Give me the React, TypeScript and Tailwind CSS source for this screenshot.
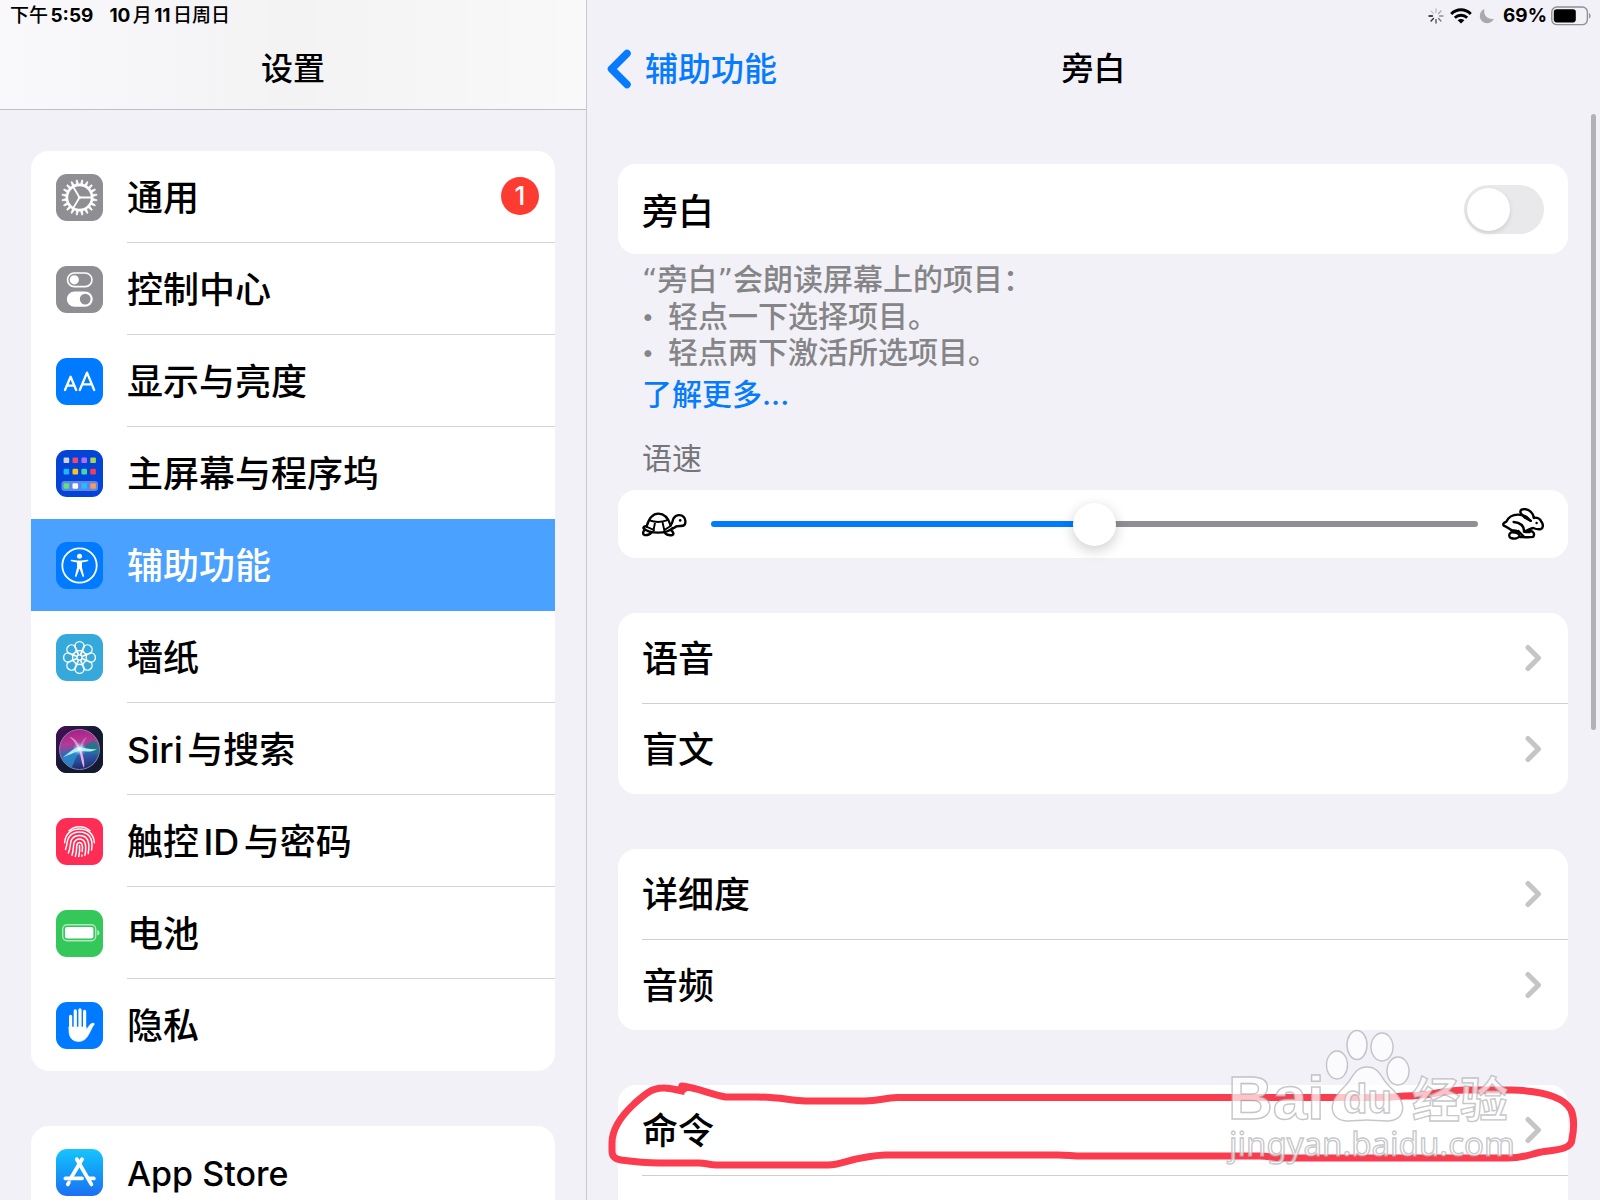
import { useState, type ReactNode } from 'react';

const spokes = (count: number) => Array.from({ length: count }, (_, i) => (360 / count) * i);

const GearIcon = () => (
  <svg viewBox="0 0 47 47" className="size-full" fill="none" stroke="#fff">
    <circle cx="23.5" cy="23.5" r="12.6" strokeWidth="2.6" />
    {spokes(20).map((angle) => (
      <path key={angle} d="M22.3 10.5 L22.9 5.8 H24.1 L24.7 10.5 Z" fill="#fff" strokeWidth="0.5" transform={`rotate(${angle + 9} 23.5 23.5)`} />
    ))}
    <path d="M23.5 23.5 H35.5 M23.5 23.5 L17.3 13 M23.5 23.5 L17.3 34" strokeWidth="1.8" />
    <circle cx="23.5" cy="23.5" r="1.6" fill="#fff" stroke="none" />
  </svg>
);

const ControlIcon = () => (
  <svg viewBox="0 0 47 47" className="size-full">
    <rect x="11.5" y="7" width="24.5" height="13.6" rx="6.8" fill="none" stroke="#fff" strokeWidth="1.6" />
    <circle cx="18.3" cy="13.8" r="4.6" fill="#fff" />
    <rect x="10.8" y="25.4" width="26" height="15.4" rx="7.7" fill="#fff" />
    <circle cx="29.2" cy="33.1" r="5.4" fill="#8e8e93" />
  </svg>
);

const DisplayIcon = () => (
  <svg viewBox="0 0 47 47" className="size-full" fill="none" stroke="#fff" strokeWidth="2.3" strokeLinecap="round" strokeLinejoin="round">
    <path d="M9 32 L14.6 18.7 L20.2 32 M11 27.6 H18.2" />
    <path d="M23.8 32 L31 14.6 L38.2 32 M26.3 26.3 H35.7" />
  </svg>
);

const homeDots = [
  { y: 7.5, fills: ['#d1d1d6', '#f2486f', '#af6cf5', '#a4d64c'] },
  { y: 18.8, fills: ['#1fb6ff', '#fcc419', '#45d6a4', '#f53d4c'] },
  { y: 33.2, fills: ['#5fe07c', '#ffffff', '#22bfff', '#f59d55'] },
];

const HomeIcon = () => (
  <svg viewBox="0 0 47 47" className="size-full">
    <rect x="5.5" y="31" width="36.5" height="10" rx="3" fill="#5f86e6" />
    {homeDots.map((row) =>
      row.fills.map((fill, i) => <rect key={fill} x={7.6 + i * 8.9} y={row.y} width="5.6" height="5.6" rx="1.2" fill={fill} />)
    )}
  </svg>
);

const AccessibilityIcon = () => (
  <svg viewBox="0 0 47 47" className="size-full" fill="none" stroke="#fff">
    <circle cx="23.5" cy="23.5" r="17.2" strokeWidth="1.8" />
    <circle cx="23.5" cy="14.2" r="2.5" fill="#fff" stroke="none" />
    <path
      d="M15.6 17.8 L21.5 18.5 H25.5 L31.4 17.8 C32.6 17.7 32.8 19 31.7 19.2 L26 20.4 V25.6 L28 33.8 C28.2 35 26.8 35.3 26.4 34.2 L23.5 26.6 L20.6 34.2 C20.2 35.3 18.8 35 19 33.8 L21 25.6 V20.4 L15.3 19.2 C14.2 19 14.4 17.7 15.6 17.8 Z"
      fill="#fff"
      stroke="none"
    />
  </svg>
);

const WallpaperIcon = () => (
  <svg viewBox="0 0 47 47" className="size-full" fill="none" stroke="#fff" strokeWidth="1.4">
    {spokes(8).map((angle) => (
      <g key={angle} transform={`rotate(${angle} 23.5 23.5)`}>
        <circle cx="23.5" cy="12.2" r="4.6" />
        <path d="M20.6 15.8 C20.4 17.8 21 19.4 22.4 21 M26.4 15.8 C26.6 17.8 26 19.4 24.6 21" strokeWidth="1.1" />
      </g>
    ))}
    <circle cx="23.5" cy="23.5" r="2.6" />
  </svg>
);

const SiriIcon = () => (
  <svg viewBox="0 0 47 47" className="size-full">
    <defs>
      <linearGradient id="siri-bg" x1="0" y1="0" x2="1" y2="1">
        <stop offset="0" stopColor="#4a0d5c" />
        <stop offset="0.5" stopColor="#131a33" />
        <stop offset="1" stopColor="#151a30" />
      </linearGradient>
      <linearGradient id="siri-orb" x1="0.35" y1="0" x2="0.5" y2="1">
        <stop offset="0" stopColor="#a81d86" />
        <stop offset="0.35" stopColor="#b53a96" />
        <stop offset="0.6" stopColor="#2f68b8" />
        <stop offset="1" stopColor="#202a70" />
      </linearGradient>
      <radialGradient id="siri-glow">
        <stop offset="0" stopColor="#ffffff" />
        <stop offset="0.4" stopColor="#d7f4ff" stopOpacity="0.6" />
        <stop offset="1" stopColor="#8fd8ff" stopOpacity="0" />
      </radialGradient>
    </defs>
    <rect width="47" height="47" fill="url(#siri-bg)" />
    <circle cx="23.5" cy="23.5" r="20" fill="url(#siri-orb)" stroke="#8b86a8" strokeWidth="1" />
    <path d="M24 23 L38 14 C44 19 43 25 42 29 Z" fill="#1c7a83" opacity="0.8" />
    <path d="M24 22 C17 22 9 28 6 32 C9 38 13 41 16 41 Z" fill="#2e8fd0" opacity="0.8" />
    <path d="M24 22 C22 15 17 11 13 11 C18 14 20 19 22 23 Z" fill="#f0a4d6" opacity="0.8" />
    <path d="M24 22 C25 16 28 12 31 11 C28 15 27 19 26 23 Z" fill="#d793e8" opacity="0.6" />
    <path d="M23 24 C25 30 25 36 28 42 C29 36 27 29 25 23 Z" fill="#f3a7e3" />
    <path d="M7 31 C14 27 18 21 24 21 C30 22 35 24 41 23 C35 27 29 25 24 25 C18 26 14 29 7 31 Z" fill="#a7f4f0" />
    <circle cx="23.5" cy="23" r="7" fill="url(#siri-glow)" />
  </svg>
);

const TouchIdIcon = () => (
  <svg viewBox="0 0 47 47" className="size-full" fill="none" stroke="#fff" strokeWidth="1.5" strokeLinecap="round">
    <path d="M13 12.8 C19 7.4 28 7.4 34 12.8" />
    <path d="M8.6 24.8 C9.2 15.4 15.6 11 23.5 11 S37.8 15.4 38.4 24.8" />
    <path d="M9.5 31.5 C11.5 27 10.4 22 13.4 18.4 C18.4 12.6 28.6 12.6 33.6 18.4 C36 21.6 36.4 27 35.6 32" />
    <path d="M12.4 35 C15 29 13.8 24.6 15.6 21.6 C19 16.2 28 16.2 31.4 21.6 C33.6 25.6 33.2 30 32.2 35.6" />
    <path d="M16 37.2 C18 31 17 27.4 18.2 24.4 C20.4 19.8 26.6 19.8 28.8 24.4 C30.6 29 29.8 33 28.8 37.4" />
    <path d="M19.4 38.2 C21.4 32 20 28.6 21.2 26 C22.4 24 24.6 24 25.8 26 C27.2 29 26.4 32 26.2 33.4" />
    <path d="M23.5 27.5 C24 32 23.6 35 22.8 38.4 M26 37 L25.8 38.2" />
  </svg>
);

const BatteryTileIcon = () => (
  <svg viewBox="0 0 47 47" className="size-full">
    <rect x="6.7" y="14.7" width="33" height="16" rx="4.4" fill="none" stroke="#fff" strokeOpacity="0.6" strokeWidth="1.4" />
    <rect x="9" y="17" width="28.4" height="11.4" rx="2" fill="#fff" />
    <path d="M41.4 20 C44 21 44 24.6 41.4 25.6 Z" fill="#fff" fillOpacity="0.7" />
  </svg>
);

const HandIcon = () => (
  <svg viewBox="0 0 47 47" className="size-full" fill="#fff" stroke="#fff" strokeLinecap="round" strokeLinejoin="round">
    <path d="M14.6 14.4 V28 M19.3 8.8 V25 M24 7.8 V25 M28.6 9.4 V26" strokeWidth="3.2" />
    <path d="M13 25 H30.2 V27.5 C31.4 26.4 32.6 24.8 33.6 23.2 C34.8 21.4 36.4 21 38 21.4 C38.6 21.6 38.6 22 38.2 22.4 C36.4 24.6 35 28 33.2 31.6 C30.6 36.6 27.6 39.5 22.8 39.5 C16.6 39.5 13 35.6 13 29 Z" strokeWidth="0.6" />
  </svg>
);

const AppStoreIcon = () => (
  <svg viewBox="0 0 47 47" className="size-full" fill="none" stroke="#fff" strokeWidth="3.8" strokeLinecap="round">
    <path d="M26 10.2 L14.6 29.6 M12.9 33.4 L11.8 35.4" />
    <path d="M20.8 10.2 L35.4 35.4" />
    <path d="M9.4 29.4 H26 M33.4 29.4 H37.8" />
  </svg>
);

const TurtleIcon = () => (
  <svg viewBox="0 0 45 25" className="h-[25px] w-[45px] shrink-0" fill="none" stroke="#000" strokeWidth="2.4" strokeLinecap="round" strokeLinejoin="round">
    <path d="M4.6 14.4 C7 6 10.6 1.6 16.4 1.6 C22.4 1.6 26.4 6.4 28.6 13.2" />
    <path d="M4.6 14.4 C2.8 13.6 1 15.4 1.6 16.4 C5 19.6 10 20.6 16 20.6 C22 20.6 27.2 19.6 30.6 16" />
    <path d="M7.6 8.4 C13 10.4 19.6 10.4 25.6 8.2 M13.2 9.8 L11.4 18.8 M20.4 9.6 L22.4 18.8 M4.8 14.8 L12 18 M22.4 18 L28.6 14" strokeWidth="1.9" />
    <path d="M28.6 13.2 C30.6 11.6 30.2 8.8 31.8 6 C33.8 2.8 38.8 2 41.6 4.8 C44 7.4 43.8 11.4 42.4 13 C40.6 14.6 37 13.4 34.4 14.4 C32.6 15.4 32 16 30.6 16.6" />
    <path d="M2.6 17.8 C0.6 20 0.8 22.4 2.4 23 C5.4 23.4 8 22.4 9.6 20.2 M22.6 20.4 C24.4 22.6 27.6 23.6 30.4 23 C32.2 22.2 31.4 19.8 28.8 18" />
    <circle cx="38.2" cy="8.4" r="1.3" fill="#000" stroke="none" />
  </svg>
);

const RabbitIcon = () => (
  <svg viewBox="0 0 42 32" className="h-8 w-[42px] shrink-0" fill="none" stroke="#000" strokeWidth="2.4" strokeLinecap="round" strokeLinejoin="round">
    <path d="M28.4 12.6 C25 7.6 20.4 6.8 16.6 6.6 C11.4 6.4 6.6 8.8 4.4 13.6 C1.6 14.6 0.6 16.2 1.8 17.6 C4.6 18.6 7 20.8 10 22.4 C12.4 22.8 14.4 22 16.4 23.8" />
    <path d="M28.8 12.8 C24.6 11.4 19.6 7.4 18.4 4.4 C18 1.6 20.6 1 23.4 1.2 C28 2.2 31.2 5.4 32 10" />
    <path d="M31.8 9.6 C35.4 9.4 38.4 11 39.4 13.8 C41.6 16.6 41.2 20 39 21 C36.4 21.8 33.6 21 31.2 20 C28.6 20 25.2 23 22.2 23.4 C22 19 20.4 14.6 11.6 14" />
    <path d="M16.4 23 C18.6 25.6 20.6 27 22.4 29.2 M27.8 22.8 C31.8 23.4 33 26.2 31.2 28.8 C27.6 29.6 23 29.2 18 29 M22 23.6 C23.8 24.4 25.4 24.2 27.8 24" />
    <path d="M9 24.4 C6.4 26 6.8 29.2 9 30 C12.4 31 16.4 30.4 17.6 28 C17.4 25.6 13 23.6 9 24.4 Z" />
    <circle cx="34.6" cy="15" r="1.2" fill="#000" stroke="none" />
  </svg>
);

const spinnerOpacity = [0.2, 0.3, 0.4, 0.5, 0.65, 0.8, 0.95, 0.15];

const SpinnerIcon = () => (
  <svg viewBox="0 0 16 16" className="size-4" stroke="#000" strokeWidth="1.4" strokeLinecap="round">
    {spokes(8).map((angle, i) => (
      <path key={angle} d="M8 1 V4.4" opacity={spinnerOpacity[i]} transform={`rotate(${angle} 8 8)`} />
    ))}
  </svg>
);

const WifiIcon = () => (
  <svg viewBox="0 0 22 16" className="h-4 w-[22px]" fill="none" stroke="#000" strokeWidth="2.9">
    <path d="M1.2 6 C6.8 0.4 15.2 0.4 20.8 6" />
    <path d="M4.8 9.8 C8.4 6.4 13.6 6.4 17.2 9.8" />
    <path d="M11 15.6 L7.6 12.3 C9.6 10.6 12.4 10.6 14.4 12.3 Z" fill="#000" stroke="none" />
  </svg>
);

const MoonIcon = () => (
  <svg viewBox="0 0 16 16" className="size-4">
    <path d="M5.4 1 C4 6.6 8.4 12 15 10.8 C13.6 13.8 10.8 15.2 8 15.2 C4 15.2 0.8 12 0.8 8 C0.8 4.8 2.6 2 5.4 1 Z" fill="#a9a9ae" />
  </svg>
);

const BatteryIcon = () => (
  <svg viewBox="0 0 40 20" className="h-5 w-10">
    <rect x="0.8" y="1" width="35.6" height="17.6" rx="5" fill="none" stroke="#8f8f94" strokeWidth="1.4" />
    <rect x="2.8" y="3.2" width="22" height="13.2" rx="2.8" fill="#000" />
    <path d="M38 7 C40 8 40 11.6 38 12.6 Z" fill="#8f8f94" />
  </svg>
);

const PawWatermark = () => (
  <svg
    viewBox="0 0 300 145"
    className="pointer-events-none absolute right-[78px] bottom-7 h-[145px] w-[300px]"
    fill="#fff"
    fillOpacity="0.7"
    stroke="#a8a8ac"
    strokeOpacity="0.65"
    strokeWidth="1.4"
  >
    <text x="6" y="92" className="font-['Liberation_Sans',sans-serif] text-[62px] font-bold">Bai</text>
    <ellipse cx="115" cy="38" rx="10.5" ry="14" />
    <ellipse cx="135" cy="18" rx="10" ry="14.5" />
    <ellipse cx="160" cy="20" rx="11" ry="14" />
    <ellipse cx="176" cy="44" rx="11" ry="14" />
    <path d="M145 40 C158 40 159 52 168 60 C178 69 185 79 178 89 C171 97 158 93 145 93 C132 93 120 97 113 89 C106 79 113 69 122 60 C131 52 132 40 145 40 Z" />
    <text x="121" y="86" className="font-['Liberation_Sans',sans-serif] text-[40px] font-bold">du</text>
    <text x="190" y="90" className="font-['Noto_Sans_CJK_SC',sans-serif] text-[48px] font-bold">经验</text>
    <text x="7" y="129" className="font-['Noto_Sans',sans-serif] text-[33px]">jingyan.baidu.com</text>
  </svg>
);

const HandDrawnLoop = () => (
  <svg
    viewBox="0 0 980 90"
    preserveAspectRatio="none"
    className="pointer-events-none absolute -top-1 -left-3 h-[90px] w-[calc(100%+28px)]"
    fill="none"
    stroke="#fb3b4e"
    strokeWidth="7"
    strokeLinejoin="round"
  >
    <path d="M79 10.5 C70 9 64 6.5 57 7 C45 7 38 14 28 23 C14 36 6 48 6 62 V70 C6 76 9 78 15 79 C30 81 42 82 53 82 H93 C100 82 104 84 110 84 H223 C236 84 250 75 280 74 H453 C462 74 468 75 478 75 H655 C664 75 670 77 678 77 H900 C920 78 928 72 940 70.5 C956 69 968 67 968 58 C970 48 970 36 967 29 C960 16 940 10 908 9 H860 C840 9 826 15 800 15 C780 17 770 16.5 760 16.5 H292 C278 17 274 20 259 20 H200 C184 19 170 16 152 16 H120 C104 13 92 7 76 5 L80 11" />
  </svg>
);

const Chevron = () => (
  <svg viewBox="0 0 18 28" className="mr-[26px] h-7 w-[18px] shrink-0" fill="none" stroke="#c5c5c7" strokeWidth="5" strokeLinecap="round" strokeLinejoin="round">
    <path d="M4 3.5 L14.5 14 L4 24.5" />
  </svg>
);

type SidebarItem = { label: string; tile: string; icon: ReactNode; badge?: number };

const sidebarItems: SidebarItem[] = [
  { label: '通用', tile: 'bg-[#8e8e93]', icon: <GearIcon />, badge: 1 },
  { label: '控制中心', tile: 'bg-[#8e8e93]', icon: <ControlIcon /> },
  { label: '显示与亮度', tile: 'bg-[#007aff]', icon: <DisplayIcon /> },
  { label: '主屏幕与程序坞', tile: 'bg-[#0443d8]', icon: <HomeIcon /> },
  { label: '辅助功能', tile: 'bg-[#007aff]', icon: <AccessibilityIcon /> },
  { label: '墙纸', tile: 'bg-[#36a9dc]', icon: <WallpaperIcon /> },
  { label: 'Siri与搜索', tile: 'bg-[#151a30]', icon: <SiriIcon /> },
  { label: '触控ID与密码', tile: 'bg-[#fd2d55]', icon: <TouchIdIcon /> },
  { label: '电池', tile: 'bg-[#34c75a]', icon: <BatteryTileIcon /> },
  { label: '隐私', tile: 'bg-[#007aff]', icon: <HandIcon /> },
];

const storeItems: SidebarItem[] = [
  { label: 'App Store', tile: 'bg-linear-to-b from-[#1ac4fb] to-[#1d6ff2]', icon: <AppStoreIcon /> },
];

type SidebarGroupProps = {
  items: SidebarItem[];
  active: string;
  onSelect: (label: string) => void;
  textSize?: string;
};

const SidebarGroup = ({ items, active, onSelect, textSize = 'text-[36px]' }: SidebarGroupProps) => (
  <ul className="overflow-hidden rounded-[18px] bg-white">
    {items.map((item, index) => {
      const selected = item.label === active;
      const divided = index < items.length - 1 && !selected && items[index + 1].label !== active;
      return (
        <li key={item.label}>
          <button
            type="button"
            onClick={() => onSelect(item.label)}
            className={`flex h-[92px] w-full items-center gap-6 pl-[25px] text-left ${selected ? 'bg-[#4ba1ff] text-white' : ''}`}
          >
            <span className={`size-[47px] shrink-0 overflow-hidden rounded-[11px] ${item.tile}`}>{item.icon}</span>
            <span className={`flex h-full flex-1 items-center justify-between border-b pr-4 ${divided ? 'border-[#d4d4d6]' : 'border-transparent'}`}>
              <span className={`pt-[3px] font-medium ${textSize}`}>{item.label}</span>
              {item.badge && (
                <span className="mb-[2px] flex size-[38px] items-center justify-center rounded-full bg-[#fe3b30] text-[26px] font-medium text-white">
                  {item.badge}
                </span>
              )}
            </span>
          </button>
        </li>
      );
    })}
  </ul>
);

const LinkGroup = ({ labels }: { labels: string[] }) => (
  <ul className="overflow-hidden rounded-[18px] bg-white pl-6">
    {labels.map((label, index) => (
      <li key={label} className={index > 0 ? 'border-t border-[#cfcfd1]' : ''}>
        <a href="#" className="flex h-[90px] items-center justify-between text-[36px] font-medium">
          <span className="pt-px">{label}</span>
          <Chevron />
        </a>
      </li>
    ))}
  </ul>
);

const App = () => {
  const [active, setActive] = useState('辅助功能');
  const [enabled, setEnabled] = useState(false);
  const [rate, setRate] = useState(50);

  return (
    <div className="relative flex h-screen overflow-hidden bg-[#f2f1f7] font-[Inter,'Noto_Sans_CJK_SC',sans-serif] text-black [text-autospace:normal]">
      {/* Sidebar */}
      <aside className="flex w-[587px] shrink-0 flex-col border-r border-[#c9c9cd]">
        <header className="h-[110px] shrink-0 border-b border-[#c0c0c4] bg-linear-to-r from-[#f9f9fc] via-[#f3f3f4] to-[#f9f9fa]">
          <div className="flex h-8 items-center gap-4 pl-[10px] text-[19px] font-medium">
            <span>下午<b className="font-bold">5:59</b></span>
            <span><b className="font-bold">10</b>月<b className="font-bold">11</b>日周日</span>
          </div>
          <h1 className="pt-3 text-center text-[32px] leading-[50px] font-medium">设置</h1>
        </header>
        <nav className="flex flex-col gap-[55px] px-[31px] pt-[41px]">
          <SidebarGroup items={sidebarItems} active={active} onSelect={setActive} />
          <SidebarGroup items={storeItems} active={active} onSelect={setActive} textSize="text-[34px]" />
        </nav>
      </aside>

      {/* Detail */}
      <main className="min-w-0 flex-1">
        <div className="flex h-8 items-center justify-end pr-[9px]">
          <SpinnerIcon />
          <span className="ml-[6px]"><WifiIcon /></span>
          <span className="ml-[7px]"><MoonIcon /></span>
          <span className="ml-2 text-[19px] font-bold">69%</span>
          <span className="ml-1"><BatteryIcon /></span>
        </div>
        <header className="grid h-[78px] grid-cols-3 items-start pt-3">
          <a href="#" className="ml-5 flex items-center gap-[14px] text-[33px] leading-[50px] font-medium text-[#067bfe]">
            <svg viewBox="0 0 24 40" className="h-10 w-6" fill="none" stroke="currentColor" strokeWidth="7.5" strokeLinecap="round" strokeLinejoin="round">
              <path d="M20 4.5 L4.5 20 L20 35.5" />
            </svg>
            辅助功能
          </a>
          <h2 className="text-center text-[32px] leading-[50px] font-medium">旁白</h2>
        </header>

        <div className="pt-[54px] pr-8 pl-[31px]">
          <label className="flex h-[90px] items-center justify-between rounded-[18px] bg-white px-6 text-[36px] font-medium">
            <span className="pt-[5px]">旁白</span>
            <input
              type="checkbox"
              role="switch"
              checked={enabled}
              onChange={(e) => setEnabled(e.target.checked)}
              className="h-[49px] w-20 appearance-none rounded-full bg-[#e9e9eb] p-[3px] before:block before:size-[43px] before:rounded-full before:bg-white before:shadow-[0_2px_5px_rgba(0,0,0,0.12)] checked:bg-[#34c759] checked:before:ml-auto"
            />
          </label>

          <div className="px-6 pt-2 text-[30px] leading-9 text-[#858588]">
            <p className="font-['DejaVu_Sans','Noto_Sans_CJK_SC',sans-serif] font-medium">“旁白”会朗读屏幕上的项目：</p>
            <ul className="font-medium">
              <li className="flex"><span className="w-[26px] text-[22px]">•</span>轻点一下选择项目。</li>
              <li className="flex"><span className="w-[26px] text-[22px]">•</span>轻点两下激活所选项目。</li>
            </ul>
            <a href="#" className="block pt-[6px] font-medium text-[#067bfe]">了解更多...</a>
          </div>

          <label htmlFor="rate" className="block px-6 pt-[28px] pb-[14px] text-[30px] leading-9 text-[#75757a]">语速</label>
          <div className="flex h-[68px] items-center gap-6 rounded-[18px] bg-white px-6">
            <TurtleIcon />
            <input
              id="rate"
              type="range"
              value={rate}
              onChange={(e) => setRate(Number(e.target.value))}
              style={{ backgroundImage: `linear-gradient(to right, #007aff ${rate}%, #8f9094 ${rate}%)` }}
              className="h-[6px] min-w-0 flex-1 appearance-none rounded-full [&::-webkit-slider-thumb]:size-[43px] [&::-webkit-slider-thumb]:appearance-none [&::-webkit-slider-thumb]:rounded-full [&::-webkit-slider-thumb]:bg-white [&::-webkit-slider-thumb]:shadow-[0_4px_14px_rgba(0,0,0,0.2)]"
            />
            <RabbitIcon />
          </div>

          <div className="flex flex-col gap-[55px] pt-[55px]">
            <LinkGroup labels={['语音', '盲文']} />
            <LinkGroup labels={['详细度', '音频']} />
            <div className="relative">
              <LinkGroup labels={['命令', '']} />
              <HandDrawnLoop />
            </div>
          </div>
        </div>
      </main>

      {/* Scroll indicator */}
      <div className="absolute top-[114px] right-1 h-[616px] w-[5px] rounded-full bg-[#b1b1b6]" />
      <PawWatermark />
    </div>
  );
};

export default App;
